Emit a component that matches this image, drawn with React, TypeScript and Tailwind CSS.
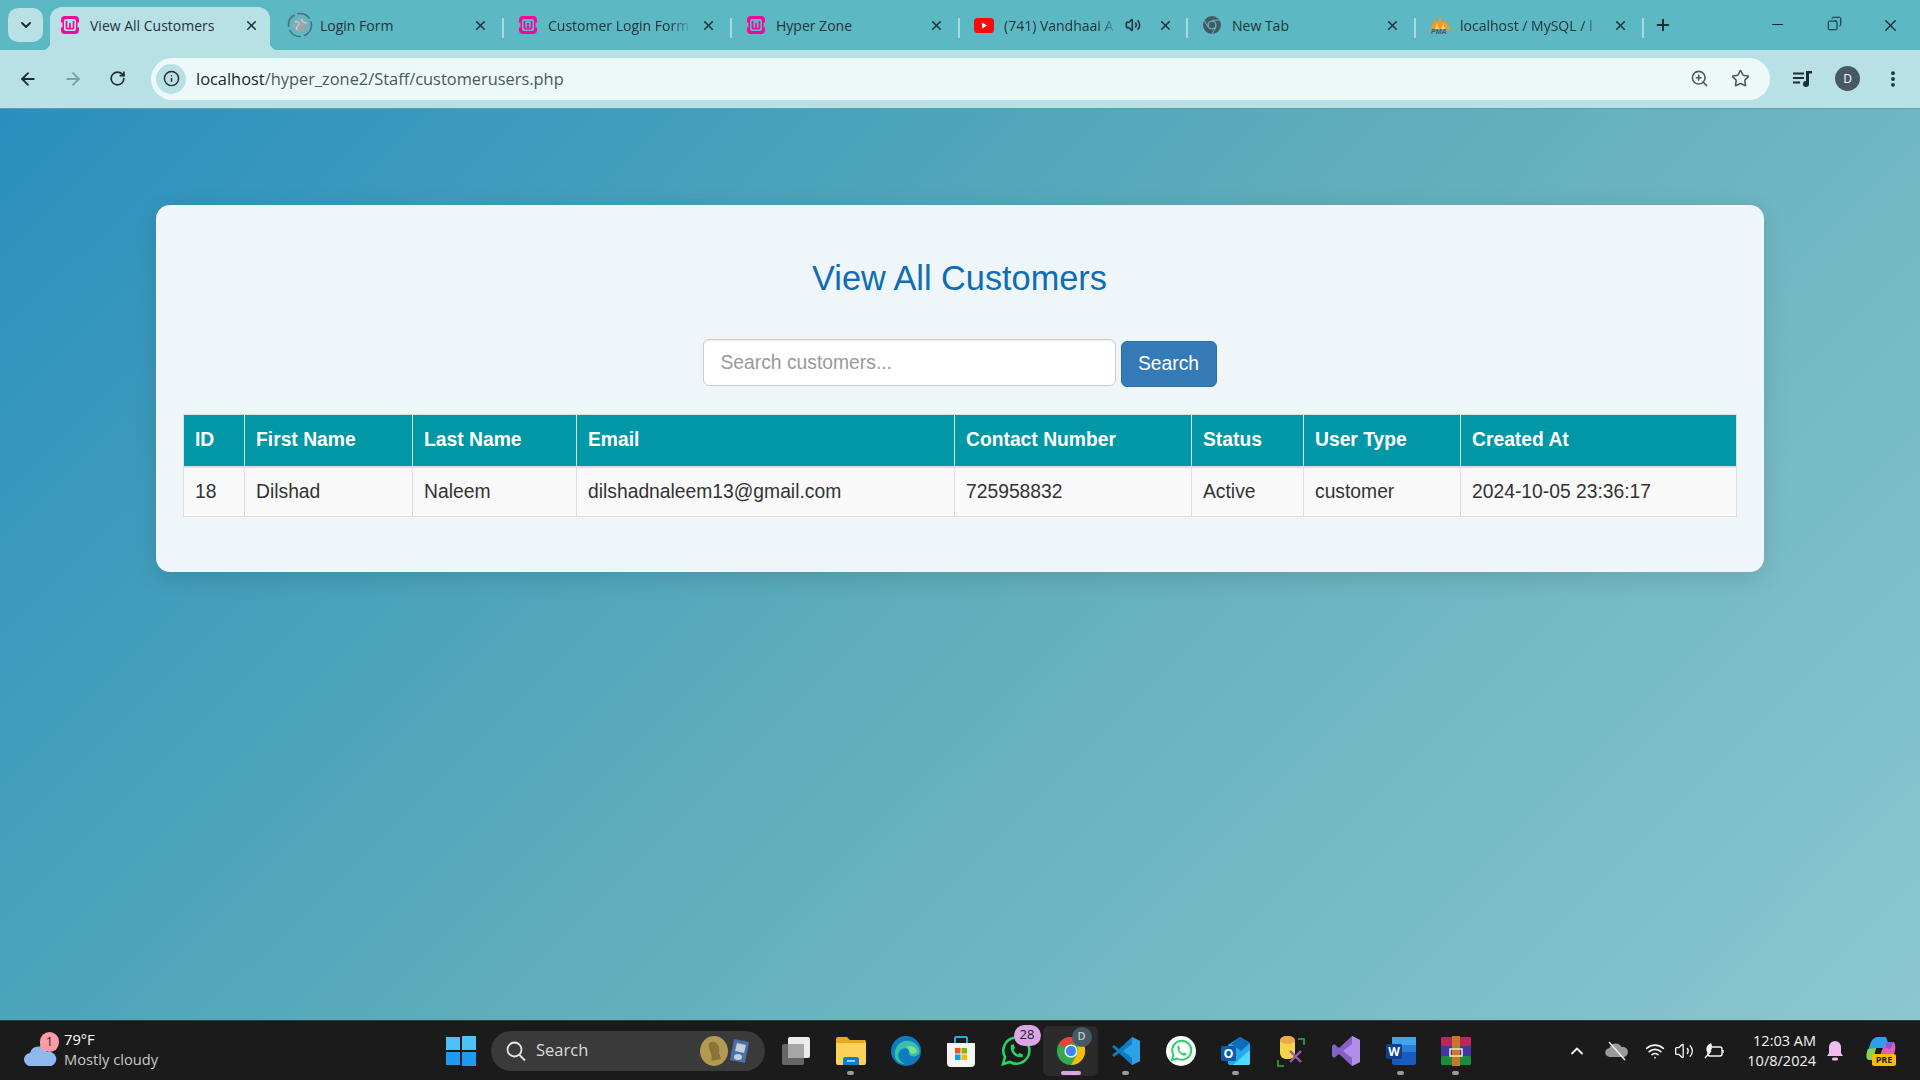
import { ArrowLeft, ArrowRight, ChevronDown, ChevronUp, Copy, Info, Minus, MoreVertical, Plus, RotateCw, Star, Volume2, Wifi, X, ZoomIn } from "lucide-react";
import type { ReactNode } from "react";

const uiFont = "font-['Open_Sans','Noto_Sans',sans-serif]";

function WampIcon() {
    return (
        <svg width="20" height="20" viewBox="0 0 20 20">
            <path d="M5 1 H15 A4 4 0 0 1 19 5 V7.500 H17.500 V12.500 H19 V15 A4 4 0 0 1 15 19 H5 A4 4 0 0 1 1 15 V12.500 H2.500 V7.500 H1 V5 A4 4 0 0 1 5 1 Z M6 4 A2 2 0 0 0 4 6 V14 A2 2 0 0 0 6 16 H14 A2 2 0 0 0 16 14 V6 A2 2 0 0 0 14 4 Z" fill="#f5079b" fillRule="evenodd" />
            <path d="M6.500 6 V12 A1.700 1.700 0 0 0 10 12 V8 M10 12 A1.700 1.700 0 0 0 13.500 12 V6" fill="none" stroke="#f5079b" strokeWidth="1.700" />
        </svg>
    );
}

function LoadingIcon() {
    return (
        <svg width="26" height="26" viewBox="0 0 26 26">
            <circle cx="13" cy="13" r="11.500" fill="none" stroke="#4f6f76" strokeWidth="1.600" strokeDasharray="14 3" />
            <circle cx="13" cy="13" r="7.500" fill="#8fa9ae" />
            <path d="M8 10 C11 9 13 11 12 13 C10 14 9 15 10 18 M15 7 C14 10 17 11 20 11" stroke="#d5e4e6" fill="none" />
        </svg>
    );
}

function YoutubeIcon() {
    return (
        <svg width="20" height="15" viewBox="0 0 20 15">
            <rect width="20" height="15" rx="3.500" fill="#f60c0c" />
            <path d="M8 4.500 L13 7.500 L8 10.500 Z" fill="#fff" />
        </svg>
    );
}

function ChromeGray() {
    return (
        <svg width="20" height="20" viewBox="0 0 20 20">
            <circle cx="10" cy="10" r="9" fill="#455a60" />
            <circle cx="10" cy="10" r="4.600" fill="#5cb8c2" />
            <circle cx="10" cy="10" r="3.200" fill="#455a60" />
            <path d="M10 5.400 L18 5 M14 12 L10 19 M6 12 L2 5" stroke="#5cb8c2" strokeWidth="1" />
        </svg>
    );
}

function PmaIcon() {
    return (
        <svg width="22" height="20" viewBox="0 0 22 20">
            <path d="M2 14 L6 3 L8 9 L11 1 L14 9 L16 4 L21 14 Z" fill="#f39a2b" />
            <path d="M6 14 L8 8 L10 14 Z M12 14 L14 8 L16 14 Z" fill="#ffd27a" />
            <text x="2" y="19" fontSize="7" fontWeight="700" fontStyle="italic" fill="#3d4f8f" fontFamily="Liberation Sans, sans-serif">PMA</text>
        </svg>
    );
}

const tabs: { title: string; icon: ReactNode; audio?: boolean; active?: boolean; fade?: boolean }[] = [
    { title: "View All Customers", icon: <WampIcon />, active: true },
    { title: "Login Form", icon: <LoadingIcon /> },
    { title: "Customer Login Form", icon: <WampIcon />, fade: true },
    { title: "Hyper Zone", icon: <WampIcon /> },
    { title: "(741) Vandhaai A", icon: <YoutubeIcon />, audio: true, fade: true },
    { title: "New Tab", icon: <ChromeGray /> },
    { title: "localhost / MySQL / l", icon: <PmaIcon />, fade: true },
];

function Tab({ title, icon, audio, active, fade }: (typeof tabs)[number]) {
    return (
        <div className="relative flex h-[43px] w-[228px] shrink-0 items-center text-[#22343a]">
            {active ? (
                <>
                    <div className="absolute inset-y-0 left-[2px] right-[6px] rounded-t-[12px] bg-[#b8e1e6]" />
                    <div className="absolute bottom-0 left-[-6px] h-2 w-2 bg-[radial-gradient(circle_at_0_0,transparent_8px,#b8e1e6_8.5px)]" />
                    <div className="absolute bottom-0 right-[-2px] h-2 w-2 bg-[radial-gradient(circle_at_100%_0,transparent_8px,#b8e1e6_8.5px)]" />
                </>
            ) : null}
            <div className="relative flex w-full items-center pb-[7px]">
                <span className={`flex shrink-0 items-center justify-center ${active ? "w-[42px] pl-[2px]" : "w-[44px] pl-[4px]"}`}>{icon}</span>
                <span className={`overflow-hidden whitespace-nowrap text-[14px] ${audio ? "w-[113px]" : active ? "w-[145px]" : "w-[144px]"} ${fade ? "[mask-image:linear-gradient(to_right,#000_85%,transparent)]" : ""}`}>
                    {title}
                </span>
                {audio ? <Volume2 size={16} strokeWidth={2.4} className="ml-[8px] mr-[8px] shrink-0" /> : null}
                <X size={15} strokeWidth={2.6} className="ml-[9px] shrink-0" />
            </div>
            {!active ? <div className="absolute bottom-[12px] right-0 h-[20px] w-[2px] rounded bg-[#a9dbe0]" /> : null}
        </div>
    );
}

function TabStrip() {
    return (
        <div className={`flex h-[50px] items-end bg-[#5cb8c2] pl-2 pr-[2px] ${uiFont}`}>
            <div className="mb-[8px] mr-[5px] flex h-[34px] w-[35px] items-center justify-center rounded-[10px] bg-[#b8e1e6]">
                <ChevronDown size={16} strokeWidth={3} className="text-[#1f2d30]" />
            </div>
            {tabs.map((tab) => (
                <Tab key={tab.title} {...tab} />
            ))}
            <div className="mb-[10px] ml-[7px] flex h-[30px] w-[24px] items-center justify-center text-[#1f2d30]">
                <Plus size={18} strokeWidth={2.6} />
            </div>
            <div className="mb-[15px] ml-auto flex text-[#16242a]">
                <span className="flex w-[57px] justify-center"><Minus size={17} strokeWidth={1.5} /></span>
                <span className="flex w-[56px] justify-center"><Copy size={15} strokeWidth={1.6} className="-scale-x-100" /></span>
                <span className="flex w-[56px] justify-center"><X size={19} strokeWidth={1.5} /></span>
            </div>
        </div>
    );
}

function Toolbar() {
    return (
        <div className="flex h-[59px] items-center border-b border-[#5f9fab] bg-[#b8e1e6] pb-[1px] text-[#1f2d30]">
            <div className="flex w-[151px] items-center pl-[18px]">
                <ArrowLeft size={20} strokeWidth={2.2} />
                <ArrowRight size={20} strokeWidth={2.2} className="ml-[25px] text-[#7d9ea3]" />
                <RotateCw size={17} strokeWidth={2.4} className="ml-[26px]" />
            </div>
            <div className="flex h-[42px] w-[1619px] items-center rounded-full bg-[#edf9f9] pl-[5px] pr-[20px]">
                <span className="flex h-[30px] w-[30px] items-center justify-center rounded-full bg-[#b8e1e6]">
                    <Info size={17} strokeWidth={2} />
                </span>
                <span className={`ml-[10px] mt-[2px] text-[16.400px] text-[#47595d] ${uiFont}`}>
                    <span className="text-[#1a2629]">localhost</span>/hyper_zone2/Staff/customerusers.php
                </span>
                <ZoomIn size={19} strokeWidth={2} className="ml-auto text-[#4b5a5e]" />
                <Star size={19} strokeWidth={2} className="ml-[22px] text-[#4b5a5e]" />
            </div>
            <svg width="22" height="18" viewBox="0 0 22 18" className="ml-[22px]" fill="#1f2d30">
                <path d="M1 2.500h11v2H1zM1 7h11v2H1zM1 11.500h7v2H1zM14 1h6v2.500h-3V14a3 3 0 1 1-3-3z" />
            </svg>
            <span className="ml-[21px] flex h-[25px] w-[25px] items-center justify-center rounded-full bg-[#455a64] text-[12px] text-white font-['Open_Sans',sans-serif]">D</span>
            <MoreVertical size={20} strokeWidth={2.6} className="ml-[23px]" />
        </div>
    );
}

const columns = [
    { title: "ID", value: "18", width: "w-[61px]" },
    { title: "First Name", value: "Dilshad", width: "w-[168px]" },
    { title: "Last Name", value: "Naleem", width: "w-[164px]" },
    { title: "Email", value: "dilshadnaleem13@gmail.com", width: "w-[378px]" },
    { title: "Contact Number", value: "725958832", width: "w-[237px]" },
    { title: "Status", value: "Active", width: "w-[112px]" },
    { title: "User Type", value: "customer", width: "w-[157px]" },
    { title: "Created At", value: "2024-10-05 23:36:17", width: "w-[276px]" },
];

function CustomerTable() {
    return (
        <table className="w-[1553px] table-fixed border-collapse text-[19.300px] leading-[28px]">
            <thead>
                <tr>
                    {columns.map((col) => (
                        <th key={col.title} className={`${col.width} border border-[#ddd] border-b-2 bg-[#0097a7] px-[11px] pb-[12px] pt-[11px] text-left font-bold text-white`}>
                            {col.title}
                        </th>
                    ))}
                </tr>
            </thead>
            <tbody>
                <tr>
                    {columns.map((col) => (
                        <td key={col.title} className="border border-[#ddd] bg-[#f9f9f9] px-[11px] py-[10px] text-[#333]">
                            {col.value}
                        </td>
                    ))}
                </tr>
            </tbody>
        </table>
    );
}

function CustomersCard() {
    return (
        <div className="mx-auto h-[367px] w-[1608px] rounded-[14px] bg-[#eef6f9] pl-[27px] pr-[28px] pt-[49px] shadow-[0_6px_24px_rgba(0,0,0,0.12)] font-['Liberation_Sans',Arial,sans-serif]">
            <h2 className="text-center text-[34.300px] leading-[48px] text-[#0f6cb6]">View All Customers</h2>
            <div className="mt-[37px] flex items-start justify-center">
                <input
                    placeholder="Search customers..."
                    className="h-[47px] w-[413px] rounded-[6px] border border-[#ccc] bg-white px-[17px] text-[19.300px] text-[#555] placeholder:text-[#999] shadow-[inset_0_1px_1px_rgba(0,0,0,0.075)]"
                />
                <button className="mt-[2px] ml-[5px] h-[46px] w-[96px] rounded-[6px] border border-[#2e6da4] bg-[#337ab7] text-[19.300px] text-white">
                    Search
                </button>
            </div>
            <div className="mt-[27px]">
                <CustomerTable />
            </div>
        </div>
    );
}

function WeatherIcon() {
    return (
        <div className="relative h-[40px] w-[36px]">
            <svg width="36" height="40" viewBox="0 0 36 40" className="absolute left-0 top-0">
                <path d="M14 6 A11 11 0 0 1 16 16 A10 10 0 0 1 1 19 A10 10 0 0 0 10 21 L20 16 Z" fill="#f5a623" />
                <path d="M7 35 a6.500 6.500 0 0 1-1-13 a9 9 0 0 1 17-1 a7 7 0 0 1 4 14 Z" fill="#8db9ee" />
            </svg>
            <span className="absolute left-[16px] top-[1px] flex h-[20px] w-[19px] items-center justify-center rounded-full bg-[#fb9da9] text-[12px] text-[#1c1c1c]">1</span>
        </div>
    );
}

function Slot({ children, dot, active }: { children: ReactNode; dot?: boolean; active?: boolean }) {
    return (
        <div className={`relative flex h-[50px] w-[55px] shrink-0 items-center justify-center rounded-[6px] ${active ? "bg-[#2b2b2b]" : ""}`}>
            {children}
            {dot ? <span className="absolute bottom-[1px] h-[4px] w-[7px] rounded-full bg-[#9a9a9a]" /> : null}
            {active ? <span className="absolute bottom-[1px] h-[4px] w-[20px] rounded-full bg-[#dba6e6]" /> : null}
        </div>
    );
}

function Taskbar() {
    return (
        <div className={`flex h-[60px] items-center border-t border-[#2f3a3d] bg-[#1b1b1b] text-white ${uiFont}`}>
            <div className="ml-[24px] flex w-[409px] shrink-0 items-center">
                <WeatherIcon />
                <div className="ml-[4px] text-[14.700px] leading-[20px]">
                    <div className="-mt-[4px]">79°F</div>
                    <div className="text-[#c8c8c8]">Mostly cloudy</div>
                </div>
            </div>
            <Slot>
                <svg width="30" height="30" viewBox="0 0 30 30">
                    <path d="M0 1 H14 V14 H0 Z M16 0 H30 V14 H16 Z" fill="#4cc2f7" />
                    <path d="M0 16 H14 V29 H0 Z M16 16 H30 V30 H16 Z" fill="#1e9af0" />
                </svg>
            </Slot>
            <div className="ml-[3px] flex h-[40px] w-[274px] shrink-0 items-center rounded-full bg-[#3a3a3a] pl-[14px] pr-[12px]">
                <svg width="22" height="22" viewBox="0 0 22 22" fill="none" stroke="#e6e6e6" strokeWidth="1.800">
                    <circle cx="9.500" cy="9.500" r="7" />
                    <path d="M14.500 15 L20 20.500" />
                </svg>
                <span className="ml-[9px] text-[16.500px] text-[#dcdcdc]">Search</span>
                <svg width="54" height="32" viewBox="0 0 54 32" className="ml-auto">
                    <ellipse cx="15" cy="16" rx="14" ry="15" fill="#b29a52" />
                    <path d="M10 8 C16 4 22 10 20 18 L22 24 L12 26 C15 20 8 14 10 8Z" fill="#8a7438" />
                    <path d="M35 4 L50 7 L46 28 L31 25 Z" fill="#4d6fa8" />
                    <path d="M38 8 L47 10 L45 18 L36 16 Z" fill="#c6cfdc" />
                    <ellipse cx="39" cy="22" rx="4" ry="3" fill="#c6cfdc" />
                </svg>
            </div>
            <div className="ml-[3px] flex items-center">
                <Slot>
                    <svg width="30" height="30" viewBox="0 0 30 30">
                        <rect x="1" y="8" width="22" height="21" rx="2" fill="#666" />
                        <rect x="7" y="1" width="22" height="21" rx="2" fill="#ececec" />
                        <rect x="7" y="8" width="16" height="14" fill="#a6a6a6" />
                    </svg>
                </Slot>
                <Slot dot>
                    <svg width="32" height="30" viewBox="0 0 32 30">
                        <path d="M1 3 a2 2 0 0 1 2-2 h9 l3 3 h15 a2 2 0 0 1 1 2 v3 H1 Z" fill="#e8a91f" />
                        <path d="M1 7 H31 V27 a2 2 0 0 1-2 2 H3 a2 2 0 0 1-2-2 Z" fill="#fcd25a" />
                        <path d="M10 21 h12 a2 2 0 0 1 2 2 v6 H8 v-6 a2 2 0 0 1 2-2 Z" fill="#0f7fc6" />
                        <rect x="12" y="24" width="8" height="2" fill="#8fd3f4" />
                    </svg>
                </Slot>
                <Slot>
                    <svg width="30" height="30" viewBox="0 0 30 30">
                        <circle cx="15" cy="15" r="15" fill="#0f7bc0" />
                        <path d="M4 21 C2 10 11 3 19 5 C27 7 30 14 28 18 C25 22 17 21 18 16 C19 12 11 10 8 16 C6 20 8 25 14 28 C9 28 5 25 4 21Z" fill="#35c1a8" />
                        <path d="M15 11 C21 9 26 12 26 16 C23 19 18 18 18 14Z" fill="#7ee08f" />
                    </svg>
                </Slot>
                <Slot>
                    <svg width="30" height="32" viewBox="0 0 30 32">
                        <path d="M9 8 V3 a1 1 0 0 1 1-1 h10 a1 1 0 0 1 1 1 v5" fill="none" stroke="#2ba7e0" strokeWidth="2" />
                        <path d="M1 8 H29 V28 a4 4 0 0 1-4 4 H5 a4 4 0 0 1-4-4 Z" fill="#f4f4f4" />
                        <rect x="9" y="13" width="5.500" height="5.500" fill="#f25022" />
                        <rect x="15.500" y="13" width="5.500" height="5.500" fill="#7fba00" />
                        <rect x="9" y="19.500" width="5.500" height="5.500" fill="#00a4ef" />
                        <rect x="15.500" y="19.500" width="5.500" height="5.500" fill="#ffb900" />
                    </svg>
                </Slot>
                <Slot>
                    <div className="relative">
                        <svg width="32" height="32" viewBox="0 0 32 32" fill="none">
                            <path d="M3 29 L5 22 A13 13 0 1 1 10 27 Z" stroke="#25d366" strokeWidth="2.600" />
                            <path d="M11 10 L13.500 9 L15 13 L13.500 14.500 C14.500 17 16 18.500 18 19.500 L19.500 18 L23 19.500 L22.500 22 C16 24 9 17 11 10Z" fill="#25d366" />
                        </svg>
                        <span className="absolute -right-[9px] -top-[10px] flex h-[21px] w-[27px] items-center justify-center rounded-full bg-[#dba6e6] text-[13px] text-[#1c1c1c]">28</span>
                    </div>
                </Slot>
                <Slot active>
                    <div className="relative">
                        <svg width="30" height="30" viewBox="0 0 32 32">
                            <circle cx="16" cy="16" r="15" fill="#34a853" />
                            <path d="M16 1 A15 15 0 0 1 29 8.500 L16 8.500 A7.500 7.500 0 0 0 9.500 12.200 L3 8.500 A15 15 0 0 1 16 1Z" fill="#ea4335" />
                            <path d="M29 8.500 A15 15 0 0 1 16 31 L22.500 19.700 A7.500 7.500 0 0 0 22.500 12 Z" fill="#fbbc05" />
                            <circle cx="16" cy="16" r="7" fill="#fff" />
                            <circle cx="16" cy="16" r="5.500" fill="#4285f4" />
                        </svg>
                        <span className="absolute -right-[6px] -top-[9px] flex h-[20px] w-[20px] items-center justify-center rounded-full bg-[#455a64] text-[11px] font-semibold text-[#c8c8c8]">D</span>
                    </div>
                </Slot>
                <Slot dot>
                    <svg width="30" height="30" viewBox="0 0 30 30">
                        <path d="M21 1 L29 5 V25 L21 29 L8 17 L3 21 L1 19 L6 15 L1 11 L3 9 L8 13 Z" fill="#0e7ec4" />
                        <path d="M21 1 L29 5 V25 L21 29 Z M21 8 L12 15 L21 22 Z" fill="#2ba2e6" fillRule="evenodd" />
                    </svg>
                </Slot>
                <Slot>
                    <svg width="30" height="30" viewBox="0 0 30 30" fill="none">
                        <circle cx="15" cy="15" r="15" fill="#fff" />
                        <path d="M6 24 L7.500 19 A9.500 9.500 0 1 1 11 22.500 Z" stroke="#25d366" strokeWidth="2" />
                        <path d="M11.500 10 L13 9.500 L14 12.500 L13 13.500 C14 15.500 15 16.500 17 17.500 L18 16.500 L20.500 17.500 L20 19.500 C15 20.500 10.500 15 11.500 10Z" fill="#25d366" />
                    </svg>
                </Slot>
                <Slot dot>
                    <svg width="30" height="30" viewBox="0 0 30 30">
                        <path d="M7 9 L19 1 L29 7 V27 a2 2 0 0 1-2 2 H9 a2 2 0 0 1-2-2 Z" fill="#28a8ea" />
                        <path d="M19 1 L29 7 L20 15 L10 8 Z" fill="#0f6cbd" />
                        <path d="M12 29 L29 14 V27 a2 2 0 0 1-2 2 Z" fill="#50d9ff" />
                        <rect x="0" y="10" width="15" height="15" rx="1.500" fill="#0a5ea8" />
                        <text x="7.500" y="22" fontSize="12.500" fontWeight="700" fill="#fff" textAnchor="middle" fontFamily="Open Sans, sans-serif">O</text>
                    </svg>
                </Slot>
                <Slot>
                    <svg width="30" height="32" viewBox="0 0 30 32" fill="none">
                        <path d="M22 4 H28 V10 M2 25 V31 H8" stroke="#2e8b3a" strokeWidth="2" />
                        <rect x="4" y="1" width="15" height="23" rx="6" fill="#f5d547" />
                        <ellipse cx="11.500" cy="5" rx="7.500" ry="4" fill="#f0a94a" />
                        <path d="M14 16 L25 27 M25 16 L14 27" stroke="#9b59b6" strokeWidth="2.400" />
                    </svg>
                </Slot>
                <Slot>
                    <svg width="30" height="32" viewBox="0 0 30 32">
                        <path d="M21 1 L29 5 V27 L21 31 L8 19 L3 23 L1 21 V11 L3 9 L8 13 Z" fill="#8661c5" />
                        <path d="M21 1 L29 5 V27 L21 31 Z M21 9 L12 16 L21 23 Z" fill="#b28ee8" fillRule="evenodd" />
                    </svg>
                </Slot>
                <Slot dot>
                    <svg width="30" height="30" viewBox="0 0 30 30">
                        <rect x="6" y="1" width="24" height="28" rx="2" fill="#185abd" />
                        <rect x="6" y="1" width="24" height="8" fill="#41a5ee" />
                        <rect x="6" y="9" width="24" height="7" fill="#2b7cd3" />
                        <rect x="0" y="8" width="16" height="15" rx="1.500" fill="#103f91" />
                        <text x="8" y="20" fontSize="12" fontWeight="700" fill="#fff" textAnchor="middle" fontFamily="Open Sans, sans-serif">W</text>
                    </svg>
                </Slot>
                <Slot dot>
                    <svg width="30" height="30" viewBox="0 0 30 30">
                        <rect y="1" width="30" height="9" rx="1" fill="#c2235c" />
                        <rect y="10" width="30" height="10" fill="#41389e" />
                        <rect y="20" width="30" height="9" rx="1" fill="#1e8a3e" />
                        <rect x="11" y="0" width="8" height="30" fill="#c9762a" />
                        <rect x="9" y="13" width="12" height="7" fill="none" stroke="#f0e6cc" strokeWidth="1.500" />
                    </svg>
                </Slot>
            </div>
            <div className="ml-auto flex items-center">
                <ChevronUp size={20} strokeWidth={2.2} className="text-[#f0f0f0]" />
                <svg width="24" height="20" viewBox="0 0 24 20" className="ml-[18px]">
                    <path d="M5 16 a4.500 4.500 0 0 1-.5-9 a6.500 6.500 0 0 1 12-1 a5 5 0 0 1 2.500 10 Z" fill="#9a9a9a" />
                    <path d="M4 1 L20 19" stroke="#f0f0f0" strokeWidth="1.500" />
                </svg>
                <Wifi size={20} strokeWidth={2} className="ml-[16px] text-[#f5f5f5]" />
                <Volume2 size={20} strokeWidth={1.600} className="ml-[9px] text-[#f5f5f5]" />
                <svg width="22" height="20" viewBox="0 0 22 20" fill="none" stroke="#f5f5f5" strokeWidth="1.400" className="ml-[9px]">
                    <rect x="5" y="6" width="14" height="9" rx="2" />
                    <path d="M20 9 v3" />
                    <path d="M8 2 C3 4 2 9 5 12 C9 10 10 6 8 2Z" fill="#f5f5f5" stroke="none" />
                    <path d="M2 17 L8 10" />
                </svg>
                <div className="ml-[19px] w-[72px] text-right text-[14.500px] leading-[20px] text-[#f2f2f2]">
                    <div>12:03 AM</div>
                    <div>10/8/2024</div>
                </div>
                <svg width="20" height="22" viewBox="0 0 20 22" fill="#f0bdf0" className="ml-[9px]">
                    <path d="M10 1 a6 6 0 0 1 6 6 v6 l2 3 H2 l2-3 V7 a6 6 0 0 1 6-6Z" />
                    <rect x="7" y="17.500" width="6" height="3" rx="1.500" />
                </svg>
                <div className="relative ml-[21px] mr-[24px] h-[30px] w-[30px]">
                    <svg width="30" height="26" viewBox="0 0 30 26">
                        <path d="M12 1 H20 L24 12 H10 L6 24 H3 C0 24 0 20 1 17 L5 6 C6 3 9 1 12 1Z" fill="#2b9fe8" />
                        <path d="M3 24 C0 22 0 18 2 13 L10 12 L7 24Z" fill="#8fd14f" />
                        <path d="M20 6 H28 C30 10 30 16 26 22 C25 24 22 25 20 25 H12 L16 14Z" fill="#e65fb0" />
                        <path d="M20 6 H28 L24 13 L19 12Z" fill="#7b5fe0" />
                    </svg>
                    <span className="absolute bottom-[0px] left-[6px] flex h-[12px] w-[24px] items-center justify-center rounded-[2px] bg-[#fbbc05] text-[9px] font-bold leading-none text-[#1c1c1c]">PRE</span>
                </div>
            </div>
        </div>
    );
}

export default function App() {
    return (
        <div className="flex h-screen w-full flex-col overflow-hidden">
            <TabStrip />
            <Toolbar />
            <main className="flex-1 bg-[linear-gradient(135deg,#2a8fbe,#5faebb_50%,#8cc7d0)] pt-[96px]">
                <CustomersCard />
            </main>
            <Taskbar />
        </div>
    );
}
